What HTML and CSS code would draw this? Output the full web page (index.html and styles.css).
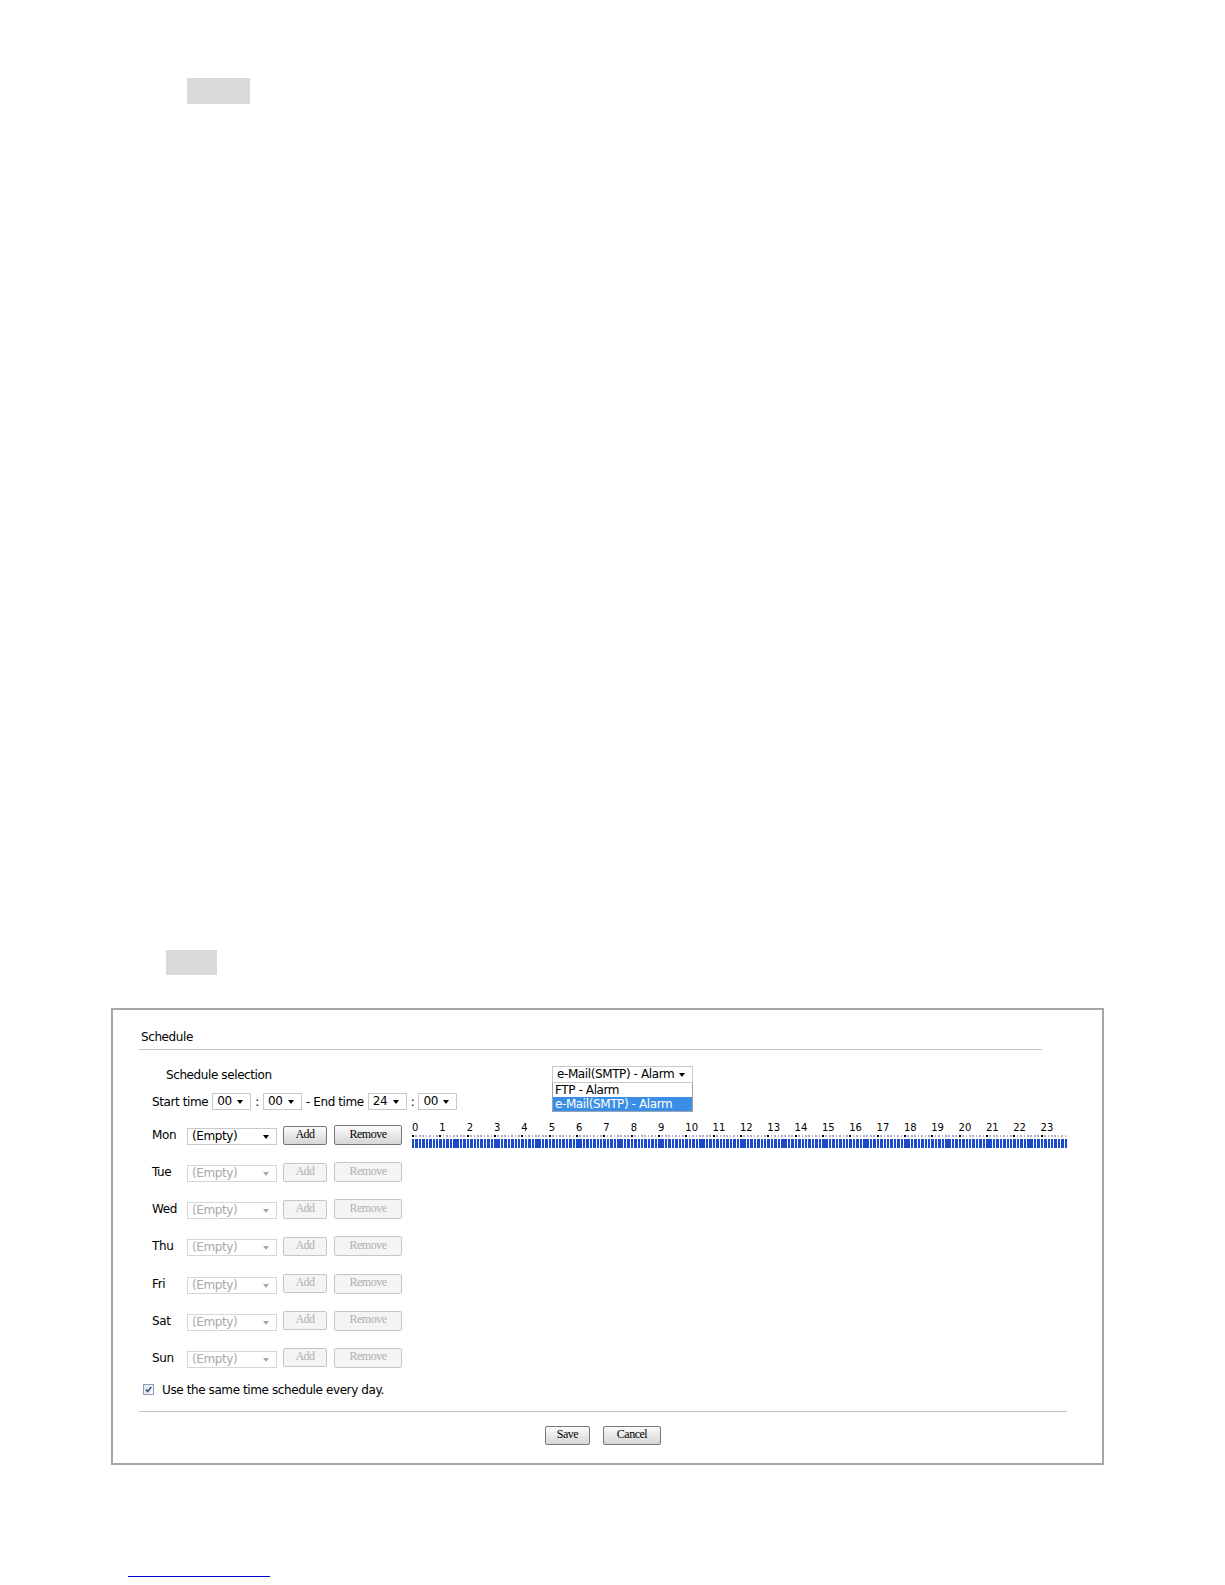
FILE: index.html
```html
<!DOCTYPE html>
<html lang="en">

<head>
    <meta charset="UTF-8">
    <title>Schedule</title>
    <link rel="stylesheet" href="styles.css">
</head>

<body>
    <div class="page">
        <div class="placeholder ph-top"></div>
        <div class="placeholder ph-mid"></div>

        <div class="panel">
            <div class="panel-title">Schedule</div>

            <div class="sel-row">
                <span class="sel-label">Schedule selection</span>
                <div class="combo">
                    <div class="select sel-type">e-Mail(SMTP) - Alarm</div>
                    <ul class="dropdown">
                        <li>FTP - Alarm</li>
                        <li class="active">e-Mail(SMTP) - Alarm</li>
                    </ul>
                </div>
            </div>

            <div class="time-row">
                <span>Start time</span>
                <div class="select sel-time">00</div>
                <span>:</span>
                <div class="select sel-time">00</div>
                <span>- End time</span>
                <div class="select sel-time">24</div>
                <span>:</span>
                <div class="select sel-time">00</div>
            </div>

            <div class="days">
                <div class="day-row">
                    <span class="day">Mon</span>
                    <div class="select sel-day">(Empty)</div>
                    <button class="btn btn-add">Add</button>
                    <button class="btn btn-remove">Remove</button>
                    <div class="timeline">
                        <div class="hours">
                            <span>0</span><span>1</span><span>2</span><span>3</span><span>4</span><span>5</span>
                            <span>6</span><span>7</span><span>8</span><span>9</span><span>10</span><span>11</span>
                            <span>12</span><span>13</span><span>14</span><span>15</span><span>16</span><span>17</span>
                            <span>18</span><span>19</span><span>20</span><span>21</span><span>22</span><span>23</span>
                        </div>
                        <div class="ticks"></div>
                        <div class="bars"></div>
                    </div>
                </div>
                <div class="day-row disabled">
                    <span class="day">Tue</span>
                    <div class="select sel-day">(Empty)</div>
                    <button class="btn btn-add" disabled>Add</button>
                    <button class="btn btn-remove" disabled>Remove</button>
                </div>
                <div class="day-row disabled">
                    <span class="day">Wed</span>
                    <div class="select sel-day">(Empty)</div>
                    <button class="btn btn-add" disabled>Add</button>
                    <button class="btn btn-remove" disabled>Remove</button>
                </div>
                <div class="day-row disabled">
                    <span class="day">Thu</span>
                    <div class="select sel-day">(Empty)</div>
                    <button class="btn btn-add" disabled>Add</button>
                    <button class="btn btn-remove" disabled>Remove</button>
                </div>
                <div class="day-row disabled">
                    <span class="day">Fri</span>
                    <div class="select sel-day">(Empty)</div>
                    <button class="btn btn-add" disabled>Add</button>
                    <button class="btn btn-remove" disabled>Remove</button>
                </div>
                <div class="day-row disabled">
                    <span class="day">Sat</span>
                    <div class="select sel-day">(Empty)</div>
                    <button class="btn btn-add" disabled>Add</button>
                    <button class="btn btn-remove" disabled>Remove</button>
                </div>
                <div class="day-row disabled">
                    <span class="day">Sun</span>
                    <div class="select sel-day">(Empty)</div>
                    <button class="btn btn-add" disabled>Add</button>
                    <button class="btn btn-remove" disabled>Remove</button>
                </div>
            </div>

            <label class="same-time">
                <span class="check">
                    <svg width="7" height="7" viewBox="0 0 7 7"><path d="M0.8 3.6 L2.7 5.6 L6.2 1" fill="none" stroke="#2a4a7a" stroke-width="1.5"/></svg>
                </span>
                Use the same time schedule every day.
            </label>

            <div class="actions">
                <button class="btn btn-save">Save</button>
                <button class="btn btn-cancel">Cancel</button>
            </div>
        </div>

        <a class="link" href="#"></a>
    </div>
</body>

</html>
```

FILE: styles.css
```css
html,
body {
    margin: 0;
    padding: 0;
    background: #fff;
}

body {
    font-family: 'DejaVu Sans', Verdana, sans-serif;
    font-size: 12px;
    letter-spacing: -0.4px;
    color: #000;
}

.page {
    padding-top: 78px;
}

.placeholder {
    background: #d9d9d9;
}

.ph-top {
    margin-left: 187px;
    width: 63px;
    height: 26px;
}

.ph-mid {
    margin: 846px 0 0 166px;
    width: 51px;
    height: 25px;
}

/* schedule panel */
.panel {
    margin: 33px 0 0 111px;
    width: 993px;
    box-sizing: border-box;
    border: 2px solid #a6a6a6;
    padding: 18px 0 18px 26px;
}

.panel-title {
    width: 903px;
    line-height: 18px;
    padding: 0 0 3px 2px;
    box-sizing: border-box;
    border-bottom: 1px solid #c4c4c4;
}

.sel-row {
    display: flex;
    align-items: center;
    margin-top: 16px;
    height: 17px;
    padding-left: 27px;
}

.sel-label {
    width: 386px;
}

.combo {
    position: relative;
}

.select {
    position: relative;
    height: 17px;
    line-height: 15px;
    box-sizing: border-box;
    border: 1px solid #c9c9c9;
    background: #fff;
    padding-left: 4px;
    white-space: nowrap;
}

.select::after {
    content: "";
    position: absolute;
    right: 7px;
    top: 6px;
    border-left: 3.5px solid transparent;
    border-right: 3.5px solid transparent;
    border-top: 4px solid #000;
}

.sel-type {
    width: 141px;
}

.dropdown {
    position: absolute;
    top: 100%;
    left: 0;
    width: 141px;
    box-sizing: border-box;
    margin: 0;
    padding: 0;
    list-style: none;
    border: 1px solid #9aa3b0;
    border-top: none;
    background: #fff;
}

.dropdown li {
    height: 14px;
    line-height: 14px;
    padding-left: 2px;
}

.dropdown li.active {
    background: #3a8ee6;
    color: #fff;
}

.time-row {
    display: flex;
    align-items: center;
    gap: 4px;
    margin-top: 10px;
    height: 17px;
    padding-left: 13px;
}

.sel-time {
    width: 39px;
}

/* day rows */
.days {
    display: flex;
    flex-direction: column;
    gap: 17.17px;
    margin-top: 15px;
    padding-left: 13px;
}

.day-row {
    display: flex;
    align-items: center;
    height: 20px;
}

.day {
    width: 35px;
}

.sel-day {
    width: 90px;
    margin-top: 3px;
}

.btn {
    box-sizing: border-box;
    height: 19px;
    border: 1px solid #767676;
    border-radius: 2px;
    background: linear-gradient(#fcfcfc, #e6e6e6 55%, #d6d6d6);
    font-family: 'Liberation Serif', 'Times New Roman', serif;
    font-size: 12px;
    letter-spacing: -0.5px;
    line-height: 14px;
    padding: 0 0 3px;
    color: #000;
}

.btn-add {
    width: 44px;
    margin-left: 6px;
}

.btn-remove {
    width: 68px;
    margin-left: 7px;
    height: 20px;
}

.disabled .select {
    color: #a8a8a8;
    border-color: #d6d6d6;
}

.disabled .select::after {
    border-top-color: #a8a8a8;
}

.btn:disabled {
    color: #b0b0b0;
    border-color: #c6c6c6;
    background: #f4f4f4;
}

/* timeline */
.timeline {
    margin-left: 10px;
    width: 656px;
}

.hours {
    display: flex;
    height: 11px;
    font-size: 10px;
    letter-spacing: 0;
    line-height: 10px;
}

.hours span {
    width: 27.333px;
    flex: none;
}

.ticks {
    height: 2px;
    margin-top: 1px;
    background:
        repeating-linear-gradient(90deg, #000 0 2px, transparent 2px 27.333px),
        repeating-linear-gradient(90deg, #a9aec4 0 1.7px, transparent 1.7px 3.4167px);
}

.bars {
    height: 9px;
    margin-top: 2px;
    background: repeating-linear-gradient(90deg, #1b4bcc 0 2.5px, #fff 2.5px 3.4167px);
}

/* footer */
.same-time {
    display: flex;
    align-items: center;
    gap: 8px;
    margin-top: 15px;
    height: 14px;
    padding-left: 4px;
}

.check {
    display: flex;
    align-items: center;
    justify-content: center;
    width: 11px;
    height: 11px;
    box-sizing: border-box;
    border: 1px solid #8d9db5;
    background: linear-gradient(135deg, #dfe3ec, #f8f9fb);
}

.actions {
    display: flex;
    justify-content: center;
    gap: 13px;
    width: 928px;
    margin-top: 14px;
    padding-top: 14px;
    border-top: 1px solid #c4c4c4;
}

.btn-save {
    width: 45px;
}

.btn-cancel {
    width: 58px;
}

.link {
    display: block;
    margin: 111px 0 0 128px;
    width: 142px;
    height: 1px;
    background: #0000cc;
}
```
